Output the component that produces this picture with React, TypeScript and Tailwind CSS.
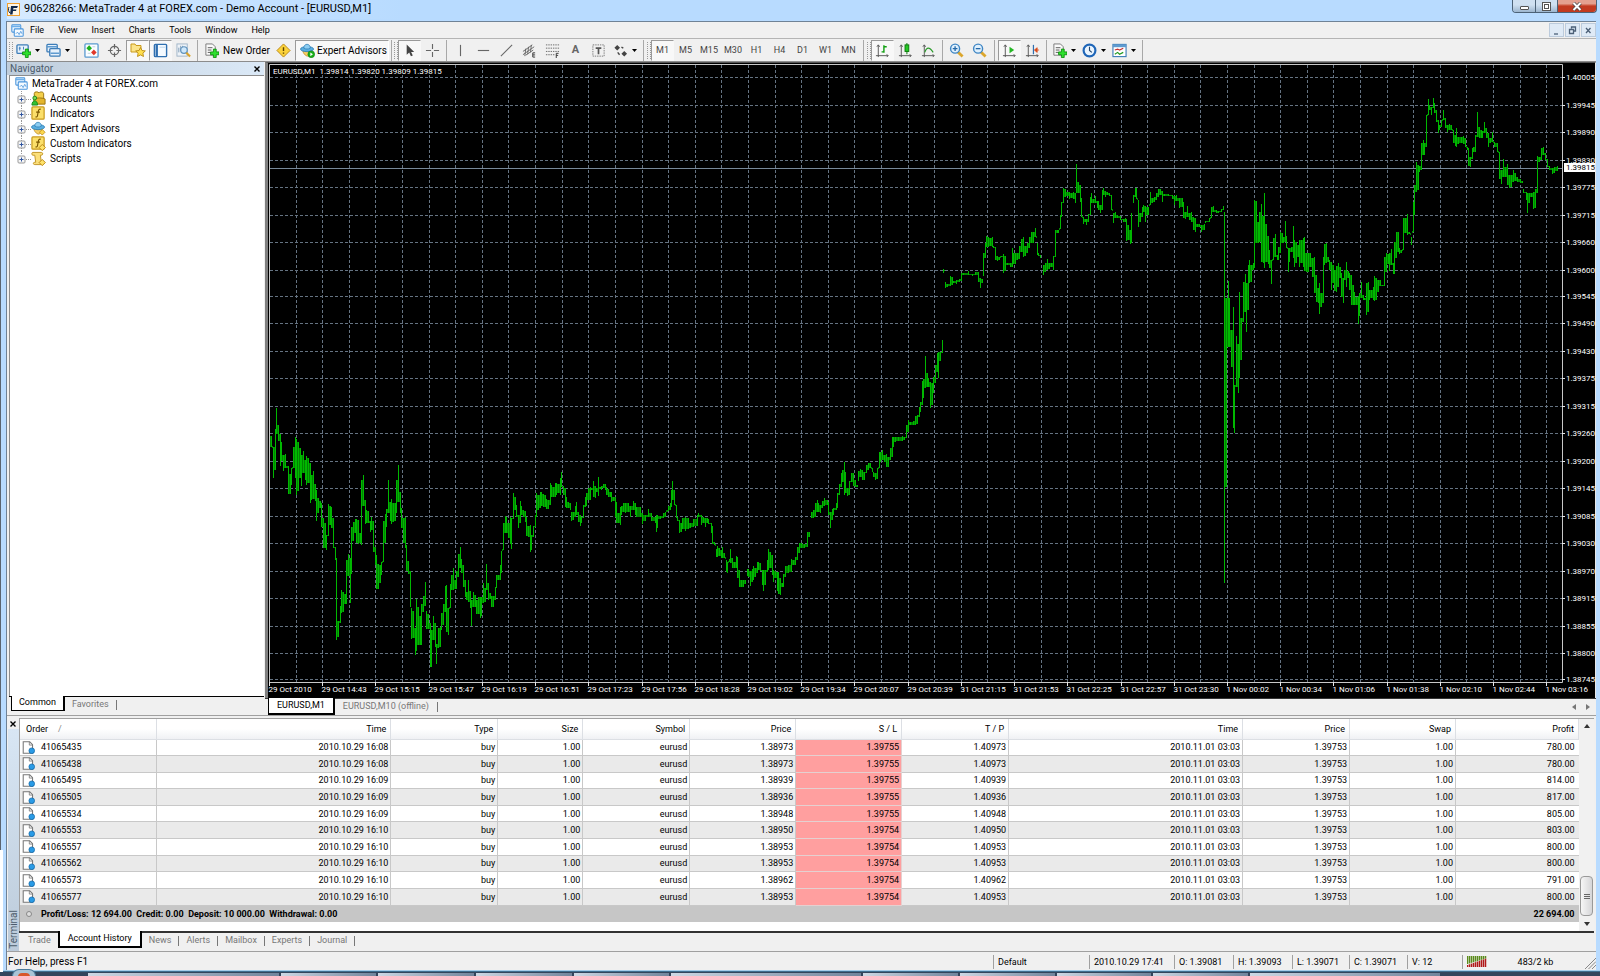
import { useState, type ReactNode } from "react";
import clsx from "clsx";

/* ---------- data ---------- */

const MENU = ["File", "View", "Insert", "Charts", "Tools", "Window", "Help"];
const TIMEFRAMES = ["M1", "M5", "M15", "M30", "H1", "H4", "D1", "W1", "MN"];
const TERMINAL_TABS = ["Trade", "Account History", "News", "Alerts", "Mailbox", "Experts", "Journal"];

const COLUMNS = [
  { label: "Order", w: 137 },
  { label: "Time", w: 234 },
  { label: "Type", w: 107 },
  { label: "Size", w: 85 },
  { label: "Symbol", w: 107 },
  { label: "Price", w: 106 },
  { label: "S / L", w: 106 },
  { label: "T / P", w: 107 },
  { label: "Time", w: 234 },
  { label: "Price", w: 107 },
  { label: "Swap", w: 106 },
  { label: "Profit", w: 123 },
];
const TOTAL_W = COLUMNS.reduce((sum, c) => sum + c.w, 0);

// order, open time, open price, s/l, t/p, profit
const ORDERS = [
  ["41065435", "16:08", "1.38973", "1.39755", "1.40973", "780.00"],
  ["41065438", "16:08", "1.38973", "1.39755", "1.40973", "780.00"],
  ["41065495", "16:09", "1.38939", "1.39755", "1.40939", "814.00"],
  ["41065505", "16:09", "1.38936", "1.39755", "1.40936", "817.00"],
  ["41065534", "16:09", "1.38948", "1.39755", "1.40948", "805.00"],
  ["41065553", "16:10", "1.38950", "1.39754", "1.40950", "803.00"],
  ["41065557", "16:10", "1.38953", "1.39754", "1.40953", "800.00"],
  ["41065562", "16:10", "1.38953", "1.39754", "1.40953", "800.00"],
  ["41065573", "16:10", "1.38962", "1.39754", "1.40962", "791.00"],
  ["41065577", "16:10", "1.38953", "1.39754", "1.40953", "800.00"],
];

const PRICES = [
  40005, 39945, 39890, 39830, 39775, 39715, 39660, 39600, 39545, 39490, 39430, 39375,
  39315, 39260, 39200, 39145, 39085, 39030, 38970, 38915, 38855, 38800, 38745,
];

const TIMES = [
  "29 Oct 2010", "29 Oct 14:43", "29 Oct 15:15", "29 Oct 15:47", "29 Oct 16:19",
  "29 Oct 16:51", "29 Oct 17:23", "29 Oct 17:56", "29 Oct 18:28", "29 Oct 19:02",
  "29 Oct 19:34", "29 Oct 20:07", "29 Oct 20:39", "31 Oct 21:15", "31 Oct 21:53",
  "31 Oct 22:25", "31 Oct 22:57", "31 Oct 23:30", "1 Nov 00:02", "1 Nov 00:34",
  "1 Nov 01:06", "1 Nov 01:38", "1 Nov 02:10", "1 Nov 02:44", "1 Nov 03:16",
];

// x, high, low triples; every array is one unbroken run of bars
const RUNS: number[][] = [
  [
    269,422,463, 271,436,447, 273,447,478, 275,429,470, 276,408,434, 278,425,441, 280,434,466,
    281,442,461, 283,455,471, 285,454,468, 288,466,494, 290,474,494, 291,468,485, 293,447,468,
    295,437,478, 296,439,495, 298,442,491, 300,448,478, 301,455,486, 303,451,473, 305,460,480,
    306,456,485, 308,458,483, 310,463,503, 311,475,500, 313,471,499, 315,484,501, 316,490,521,
    318,498,513, 320,501,508, 321,503,527, 323,518,548, 325,523,548, 326,535,550, 328,504,536,
    330,506,525, 331,507,528, 333,518,548, 335,547,560, 336,558,640, 338,621,637, 340,606,623,
    341,590,613, 343,592,612, 345,594,604, 346,560,604, 348,554,576, 350,558,603, 351,527,574,
    353,522,541, 355,519,533, 356,519,543, 358,520,544, 360,533,543, 361,480,545, 363,475,506,
    365,500,524, 366,510,523, 368,511,523, 370,521,532, 371,517,530, 373,521,552, 375,547,565,
    376,555,589, 378,564,589, 380,565,583, 381,562,575, 383,521,562, 385,514,543, 386,509,527,
    388,480,513, 390,502,521, 391,499,524, 393,503,522, 395,503,521, 396,480,513, 398,465,502,
    400,492,513, 401,508,528, 403,518,543, 405,517,548, 406,545,571, 408,561,574, 410,571,607,
    411,608,639, 413,611,638, 415,628,655, 416,599,651, 418,607,645, 420,616,645, 421,604,645,
    423,596,612, 425,582,606, 426,611,629, 428,614,629, 430,623,667, 431,630,667, 433,616,640,
    435,623,647, 436,644,664, 438,628,648, 440,627,647, 441,613,630, 443,604,625, 445,586,612,
    446,585,632, 448,608,635, 450,584,608, 451,575,590, 453,568,590, 455,580,589, 456,571,589,
    458,554,577, 460,547,568, 461,559,573, 463,565,587, 465,580,597, 466,592,600, 468,580,602,
    470,591,608, 471,600,626, 473,592,607, 475,595,607, 476,600,614, 478,597,614, 480,597,618,
    481,597,616, 483,583,603, 485,588,602, 486,564,590, 488,583,600, 490,593,599, 491,596,607,
    493,596,607, 495,587,600, 496,575,588, 498,575,580, 500,565,580, 501,551,573, 503,523,550,
    505,516,533, 506,517,533, 508,523,538, 510,517,544, 511,518,549, 513,493,519, 515,497,510,
    516,505,517, 518,515,528, 520,501,523, 521,506,515, 523,510,517, 525,511,522, 526,517,536,
    528,526,537, 530,525,552, 531,535,550, 533,526,537, 535,515,527, 536,493,517, 538,495,510,
    540,492,508, 541,492,506, 543,494,507, 545,495,507, 546,499,509, 548,500,509, 550,483,505,
    551,485,497, 553,487,497, 555,483,497, 556,483,495, 558,484,493, 560,478,495, 561,472,487,
    563,486,495, 565,488,507, 566,497,508, 568,502,508, 570,503,510, 571,512,521, 573,512,520,
    575,506,517, 576,502,515, 578,512,522, 580,515,526, 581,517,523, 583,505,518, 585,497,507,
    586,493,506, 588,488,500, 590,487,500, 591,488,490, 593,481,497, 595,486,498, 596,488,492,
    598,477,496, 600,487,489, 601,486,490, 603,484,488, 605,484,490, 606,487,495, 608,489,497,
    610,492,497, 611,492,502, 613,497,501, 615,497,517, 616,502,523, 618,513,523, 620,507,525,
    621,506,515, 623,503,512, 625,503,513, 628,503,512, 630,506,517, 633,501,510, 635,503,515,
    636,507,517, 640,507,517, 642,513,524, 645,515,521, 648,509,517, 651,513,521, 655,517,523,
    656,515,532, 657,515,528, 660,516,519, 663,513,518, 665,512,517, 668,506,511, 670,503,510,
    671,490,507, 672,481,500, 674,490,505, 676,505,518, 677,517,521, 679,520,533, 681,523,532,
    682,518,529, 685,517,531, 688,518,529, 690,523,528, 693,519,527, 697,515,526, 698,513,517,
    701,515,525, 703,517,523, 705,518,527, 707,518,523, 708,519,524, 711,523,533, 712,526,544,
    714,542,545, 716,549,557, 717,546,557, 719,548,556, 721,550,558, 722,547,558, 724,553,558,
    726,560,572, 727,562,573, 729,559,562, 730,549,563, 732,558,568, 734,562,568, 736,556,568,
    737,557,578, 739,570,587, 741,580,587, 743,580,587, 745,580,584,
  ],
  [
    747,569,576, 748,569,577, 750,571,586, 752,569,582, 753,566,580, 755,568,577, 757,562,573,
    758,562,570, 760,563,571, 762,570,585, 763,570,591, 765,570,585, 767,560,572, 768,549,570,
    770,552,568, 772,555,575, 773,570,582, 775,571,578, 777,572,591, 778,572,594, 780,578,595,
    782,583,587, 783,574,587, 785,566,577, 788,565,573, 791,559,572, 793,560,565, 795,557,565,
    797,547,560, 799,543,553, 801,543,548, 804,544,548, 807,532,547, 809,532,537,
  ],
  [
    811,512,518, 813,510,518, 815,503,517, 817,500,512, 818,503,512, 820,505,513, 822,501,508,
    824,498,506, 827,500,505, 828,502,515, 830,512,528, 832,509,520, 833,508,515, 836,503,510,
    837,493,508, 839,484,495, 841,473,487, 842,470,482, 844,462,495, 845,472,493, 847,488,496,
    849,481,495, 851,473,482, 853,473,486, 855,480,487, 857,485,487, 858,471,481, 860,469,477,
    862,470,480, 864,472,480, 866,465,473, 868,463,470, 870,463,468, 872,468,472, 873,472,477,
    875,473,480, 877,468,479, 879,452,468, 880,452,462, 882,450,460, 884,455,462, 886,454,467,
    888,457,467, 890,448,460, 892,437,457, 893,437,447, 895,437,442, 898,437,441, 902,436,441,
    904,437,440, 906,425,438, 908,420,432, 910,422,425, 913,421,425, 915,416,425, 917,415,424,
    919,407,417, 920,402,412, 922,381,405, 923,379,398, 925,356,388, 927,373,387, 928,378,387,
    930,382,408, 932,383,405, 933,377,393, 935,365,383, 937,353,372, 938,352,378, 940,352,361,
    942,340,353,
  ],
  [943,269,273, 944,270,271],
  [
    945,282,288, 947,284,287, 950,276,286, 952,277,285, 953,281,283, 956,280,284, 959,279,282,
    961,273,281, 963,273,275, 968,271,275, 972,274,276, 975,272,275, 978,272,282, 980,278,288,
    982,279,283, 983,253,276, 985,243,258, 986,236,247, 988,237,247, 990,238,246, 992,237,247,
    993,246,248, 995,247,260, 997,256,261, 999,257,260, 1001,256,257, 1003,254,273, 1005,256,271,
    1007,263,265, 1010,263,267, 1012,248,267, 1013,253,264, 1015,253,264, 1017,253,260,
    1019,246,259, 1021,239,252, 1023,237,257, 1025,246,256, 1027,243,253, 1029,237,248,
    1031,232,243, 1033,232,243, 1035,228,237, 1037,243,255, 1038,253,256, 1040,255,258,
  ],
  [
    1043,265,275, 1045,263,272, 1047,259,270, 1049,263,269, 1051,263,267, 1053,256,270,
    1055,230,257, 1057,230,233, 1058,230,233, 1060,215,229, 1061,202,217, 1063,188,203,
    1065,189,197, 1067,192,196, 1069,192,199, 1071,193,198, 1073,192,199, 1075,193,203,
    1076,164,193, 1078,182,193, 1080,185,202, 1081,198,217, 1083,217,224, 1085,219,222,
    1086,219,225, 1088,214,222, 1090,197,215, 1091,193,203, 1093,199,203, 1095,196,203,
    1097,201,208, 1098,201,210, 1100,205,213, 1102,190,210, 1103,188,195, 1105,191,197,
    1107,192,195, 1109,193,196, 1111,195,210, 1113,213,223, 1115,212,218, 1117,215,218,
    1120,216,220, 1123,219,222, 1125,218,222, 1126,219,241, 1128,225,240, 1130,230,244,
    1131,213,243,
  ],
  [
    1133,195,203, 1135,188,197, 1136,188,199, 1138,200,227, 1140,213,222,
    1142,207,217, 1143,205,212, 1145,206,222, 1147,207,215, 1148,207,215, 1150,192,205,
    1152,198,203, 1154,197,202, 1156,193,200, 1158,189,197, 1160,189,195, 1162,191,202,
    1164,194,196, 1168,194,196, 1172,195,199, 1174,196,205, 1176,195,201, 1179,198,208,
    1182,198,207, 1183,202,218, 1185,212,219, 1187,206,217, 1189,213,220, 1191,212,222,
    1193,217,230, 1195,218,232, 1197,224,227, 1199,224,227, 1201,225,232, 1204,224,230,
    1205,221,223, 1209,218,222, 1211,207,218, 1213,206,212, 1216,210,213, 1218,211,213,
    1221,209,212, 1223,206,210,
  ],
  [
    1224,212,583, 1226,298,487, 1228,281,347, 1229,298,347, 1231,330,367, 1233,307,428,
    1234,385,433, 1236,336,387, 1238,344,393, 1239,292,378, 1241,318,360, 1243,282,322,
    1245,274,312, 1246,283,332, 1248,265,310, 1249,260,283, 1251,265,282, 1253,263,270,
    1254,200,268, 1256,201,243, 1258,222,243, 1259,212,242, 1261,204,262, 1263,216,263,
    1264,193,268, 1266,224,262, 1268,236,264, 1269,250,268, 1271,260,284, 1273,238,260,
    1275,234,257, 1277,255,260, 1278,247,260, 1280,232,253, 1282,233,243, 1283,237,243,
    1285,221,242, 1286,236,248, 1288,248,272, 1289,248,262, 1291,247,252, 1293,226,258,
    1294,240,267, 1296,242,263, 1298,245,257, 1299,240,267, 1301,240,263, 1303,238,267,
    1304,237,271, 1306,253,272, 1308,253,272, 1310,253,267, 1312,258,277, 1314,257,293,
    1316,275,302, 1318,288,303, 1319,283,314, 1321,293,307, 1323,257,303, 1324,244,265,
    1326,243,263, 1328,257,262, 1329,260,270, 1331,262,290, 1333,265,283, 1334,270,291,
    1336,266,292, 1338,263,287, 1340,267,278, 1341,273,297, 1343,278,303, 1344,270,280,
    1346,262,287, 1348,271,278, 1349,273,290, 1351,275,305, 1353,285,305, 1354,292,305,
    1356,297,305, 1358,296,324, 1359,293,316, 1361,282,298, 1363,295,300, 1364,298,300,
    1366,283,315, 1368,282,312, 1369,290,300, 1371,290,298, 1373,287,300, 1374,276,301,
    1376,278,300, 1378,280,292, 1380,280,286, 1382,285,286, 1384,257,286, 1386,253,272,
    1388,254,264, 1389,253,271, 1391,249,265, 1393,263,274, 1394,242,274, 1396,232,258,
    1398,232,252, 1399,248,254, 1401,250,253, 1403,218,250, 1405,218,233, 1407,214,235,
    1409,232,234, 1411,237,245, 1413,202,232, 1414,185,215, 1416,162,192, 1418,165,190,
    1419,166,172, 1421,143,170, 1423,140,155, 1424,143,155, 1426,115,147, 1428,99,115,
    1429,105,110, 1431,107,115, 1433,98,108, 1434,103,113, 1436,110,122, 1438,120,133,
    1439,125,130, 1441,120,127, 1443,110,120, 1445,118,128, 1447,125,132, 1449,124,130,
    1451,125,130, 1453,130,143, 1455,135,146, 1456,128,147, 1458,137,144, 1461,137,143,
    1463,136,144, 1465,138,147, 1467,147,150, 1468,148,166, 1470,157,167, 1472,148,159,
    1473,147,152, 1475,135,152, 1477,112,137, 1479,127,138, 1481,130,138, 1482,131,138,
    1484,122,133, 1486,128,138, 1488,133,147, 1490,138,143, 1492,132,142, 1494,142,147,
    1497,143,152, 1499,152,179, 1501,170,184, 1503,159,177, 1505,167,177, 1507,164,185,
    1509,175,188, 1511,175,187, 1513,170,182, 1515,173,181, 1517,177,182, 1520,179,183,
    1522,181,183,
  ],
  [
    1523,189,193, 1526,192,200, 1527,193,213, 1529,193,203, 1531,193,197, 1533,192,209,
    1535,189,208, 1537,156,193, 1539,157,162, 1541,148,160, 1543,147,155, 1545,153,160,
    1547,159,167, 1549,166,170, 1552,168,174, 1554,167,173, 1557,166,171,
  ],
];

/* ---------- chart ---------- */

const yOf = (price: number) => Math.round(76.6 + (40005 - price) * 0.478) + 0.5;
const gridX = (k: number) => 269.5 + Math.round(k * 26.61);

function barPath() {
  let bars = "";
  let joins = "";
  for (const run of RUNS) {
    for (let i = 0; i < run.length; i += 3) {
      const [x, hi, lo] = run.slice(i, i + 3);
      bars += `M${x + 0.5} ${hi}V${lo}`;
      if (i + 3 < run.length) {
        const [nx, nhi, nlo] = run.slice(i + 3, i + 6);
        const top = Math.max(hi, nhi);
        const bottom = Math.min(lo, nlo);
        for (let g = x + 1; g < nx; g++) {
          joins += top < bottom ? `M${g + 0.5} ${top}V${bottom}` : `M${g + 0.5} ${bottom - 1}v2`;
        }
      }
    }
  }
  return { bars, joins };
}

const { bars: BARS, joins: JOINS } = barPath();

function PriceChart() {
  return (
    <svg
      viewBox="268 63 1327 635"
      className="block h-full w-full bg-black font-['Roboto',sans-serif] text-[8px]"
      role="img"
      aria-label="EURUSD M1 bar chart"
    >
      <g stroke="#778899" strokeWidth="1" strokeDasharray="3 2" opacity="0.85">
        {Array.from({ length: 48 }, (_, i) => (
          <line key={i} x1={gridX(i + 1)} x2={gridX(i + 1)} y1="65" y2="682" />
        ))}
        {PRICES.map((p) => (
          <line key={p} x1="270" x2="1562" y1={yOf(p)} y2={yOf(p)} />
        ))}
      </g>
      <line x1="269" x2="1562" y1="168.5" y2="168.5" stroke="#778899" />
      <path d={JOINS} stroke="#008400" fill="none" />
      <path d={BARS} stroke="#00b800" fill="none" />
      <path d="M269.5 64.5H1562.5V682.5H269.5Z" stroke="#c8c8c8" fill="none" />
      <rect x="270" y="66" width="173" height="9" fill="#000" />
      <text x="273" y="74" fill="#fff">EURUSD,M1&nbsp; 1.39814 1.39820 1.39809 1.39815</text>
      {PRICES.map((p) => (
        <g key={p}>
          <path d={`M1562 ${yOf(p)}h3`} stroke="#e8e8e8" />
          <text x="1566" y={yOf(p) + 2.5} fill="#fff">{`1.${p - 0}`.replace("1.4", "1.4")}</text>
        </g>
      ))}
      <rect x="1564" y="163" width="31" height="9" fill="#fff" />
      <text x="1566" y="170" fill="#000">1.39815</text>
      {TIMES.map((t, i) => (
        <g key={t}>
          <path d={`M${gridX(i * 2)} 682v4`} stroke="#e8e8e8" />
          <text x={gridX(i * 2) - 1} y="692" fill="#fff">{t}</text>
        </g>
      ))}
    </svg>
  );
}

/* ---------- icons ---------- */

function Ico({ children, className = "size-[15px]" }: { children: ReactNode; className?: string }) {
  return (
    <svg viewBox="0 0 16 16" fill="none" className={clsx("shrink-0", className)} aria-hidden="true">
      {children}
    </svg>
  );
}

const Plus = () => (
  <path d="M10 6.500h3v3h3v3h-3v3h-3v-3H7v-3h3z" fill="#2ee02e" stroke="#0a8a0a" strokeWidth="0.9" />
);

const NewChartIcon = () => (
  <Ico>
    <rect x="1" y="2" width="12" height="9" rx="1" fill="#e6f1fb" stroke="#3d7db8" strokeWidth="1.4" />
    <path d="M3 5.500h2M4 4v4M8 4v3" stroke="#3d7db8" />
    <Plus />
  </Ico>
);

const ProfilesIcon = () => (
  <Ico>
    <rect x="1" y="1.500" width="11" height="8" rx="1" fill="#e6f1fb" stroke="#3d7db8" strokeWidth="1.4" />
    <rect x="4" y="6" width="11" height="8" rx="1" fill="#e6f1fb" stroke="#3d7db8" strokeWidth="1.4" />
    <path d="M1 4h11M5 11h9" stroke="#5f9bd0" strokeWidth="1.5" />
  </Ico>
);

const MarketIcon = () => (
  <Ico>
    <rect x="1" y="1" width="14" height="14" rx="1" fill="#fafdff" stroke="#5a9ad0" strokeWidth="1.4" />
    <path d="M5.500 2.500l3 3-3 3-3-3z" fill="#1fb01f" />
    <path d="M10.500 7l3 3-3 3-3-3z" fill="#e0382a" />
    <path d="M9 4h3M4 11h3" stroke="#b8cfe2" />
  </Ico>
);

const TargetIcon = () => (
  <Ico>
    <circle cx="8" cy="8" r="4.500" stroke="#666" strokeWidth="1.3" />
    <path d="M8 1v5M8 10v5M1 8h5M10 8h5" stroke="#666" strokeWidth="1.3" />
  </Ico>
);

const FolderStarIcon = () => (
  <Ico className="size-4">
    <path d="M1 2h4l1 1.500h5V10H1z" fill="#fbe48a" stroke="#c99a1c" />
    <path d="M10.500 5.500l1.500 3 3.300.4-2.400 2.300.6 3.300-3-1.600-3 1.600.6-3.300-2.400-2.300 3.300-.4z" fill="#ffdf4f" stroke="#b98a12" strokeWidth="0.9" />
  </Ico>
);

const PanelIcon = () => (
  <Ico>
    <rect x="1.500" y="1.500" width="13" height="13" rx="1" fill="#f4faff" stroke="#2f6fb0" strokeWidth="1.5" />
    <path d="M4 2v12" stroke="#2f6fb0" strokeWidth="2.500" />
    <path d="M7 4.500h6" stroke="#b9d3ea" />
  </Ico>
);

const TesterIcon = () => (
  <Ico>
    <rect x="1" y="1" width="11" height="13" fill="#eef3f8" stroke="#9fb4c7" />
    <path d="M3 10V5M5 8V3M7 6V3" stroke="#7c9ab5" />
    <circle cx="8.500" cy="7.500" r="3.500" fill="#cfe8fb" stroke="#5f92bd" strokeWidth="1.3" />
    <path d="M11 10.500l4 4" stroke="#d9a32c" strokeWidth="2.200" />
  </Ico>
);

const OrderIcon = () => (
  <Ico>
    <path d="M2 1h7l3 3v9H2z" fill="#fafafa" stroke="#777" />
    <path d="M4 5h5M4 7.500h4M4 10h3" stroke="#555" />
    <Plus />
  </Ico>
);

const AlertIcon = () => (
  <Ico>
    <path d="M8 1l7 7-7 7-7-7z" fill="#fbd23a" stroke="#b98511" />
    <path d="M8 4.500v4M8 10v1.500" stroke="#5c4300" strokeWidth="1.5" />
  </Ico>
);

const HatIcon = ({ badge = "play" }: { badge?: "play" | "gold" }) => (
  <Ico>
    <path d="M3 8.500c1 4 4 5.500 5 5.500s3-1 4-5.500c-3 1-6 1-9 0z" fill="#f6cf64" stroke="#b88a22" strokeWidth="0.8" />
    <ellipse cx="7.500" cy="6.500" rx="7" ry="2.700" fill="#58aee0" stroke="#2d7cb3" strokeWidth="0.8" />
    <path d="M4 5.500c0-5.500 7-5.500 7 0-2 1.200-5 1.200-7 0z" fill="#8ccdf2" stroke="#2d7cb3" strokeWidth="0.8" />
    {badge === "play" ? (
      <>
        <circle cx="12" cy="12" r="3.600" fill="#19b019" stroke="#0b7a0b" strokeWidth="0.6" />
        <path d="M11 10l2.800 2-2.800 2z" fill="#fff" />
      </>
    ) : (
      <path d="M12 9l3 3-3 3-3-3z" fill="#fbd74c" stroke="#b98511" strokeWidth="0.8" />
    )}
  </Ico>
);

const CursorIcon = () => (
  <Ico><path d="M5 1.500v11l2.700-2.300 1.800 4 2-.9-1.800-3.800H13z" fill="#444" /></Ico>
);
const CrossIcon = () => (
  <Ico><path d="M8 1v5.500M8 9.500V15M1 8h5.500M9.500 8H15" stroke="#666" strokeWidth="1.2" /></Ico>
);
const VLineIcon = () => <Ico><path d="M8 2v12" stroke="#666" strokeWidth="1.2" /></Ico>;
const HLineIcon = () => <Ico><path d="M2 8h12" stroke="#666" strokeWidth="1.2" /></Ico>;
const TrendIcon = () => <Ico><path d="M2 14L14 2" stroke="#666" strokeWidth="1.2" /></Ico>;

const ChannelIcon = () => (
  <Ico>
    <path d="M1 9L11 2M1 12.500L13 4M4 13l8-5.500M4 6l-1 8M7 4l-1 8M10 2l-1 8" stroke="#666" />
    <path d="M14 10.500h-2.500v4.500H14M11.500 12.700H14" stroke="#333" />
  </Ico>
);

const FiboIcon = () => (
  <Ico>
    <path d="M1 2h14M1 5.500h14M1 9h14M1 12.500h9" stroke="#666" strokeDasharray="1.500 1" />
    <path d="M14.500 11h-2.500v5M12 13.200h2" stroke="#333" />
  </Ico>
);

const LabelIcon = () => (
  <Ico>
    <rect x="2" y="2" width="12" height="12" stroke="#777" strokeDasharray="1.500 1" />
    <path d="M5 5.500h6M8 5.500V12" stroke="#555" strokeWidth="1.8" />
  </Ico>
);

const ArrowsIcon = () => (
  <Ico>
    <path d="M4.500 2l3 3-3 3-3-3zM12 8.500l3 3-3 3-3-3z" fill="#444" />
    <path d="M9 4.500l2 1M5 10l2 2.500" stroke="#444" strokeWidth="1.5" />
  </Ico>
);

const Axes = () => (
  <path d="M3.500 2v13M1 13.500h13M2 4l1.500-2L5 4M12.500 12l1.500 1.500-1.500 1.500" stroke="#555" />
);
const BarsIcon = () => <Ico><Axes /><path d="M9.500 2.500v8M9.500 4h3M7 9.500h2.500" stroke="#12a012" strokeWidth="1.500" /></Ico>;
const CandleIcon = () => (
  <Ico><Axes /><path d="M9.500 0v12" stroke="#0a7a0a" /><rect x="7.500" y="2" width="4" height="7" fill="#25c925" stroke="#0a7a0a" /></Ico>
);
const LineIcon = () => <Ico><Axes /><path d="M4 10c2-6 5-6 9 0" stroke="#2a9a2a" strokeWidth="1.2" /></Ico>;
const ScrollIcon = () => <Ico><Axes /><path d="M8 4l5 3.500-5 3.500z" fill="#25b825" /></Ico>;
const ShiftIcon = () => (
  <Ico>
    <Axes />
    <path d="M9 2v10" stroke="#2f6fb0" strokeWidth="1.3" />
    <path d="M10 7.500l3-2.500v5zM13 7.500h2" fill="#d84a1a" stroke="#d84a1a" strokeWidth="0.8" />
  </Ico>
);

const ZoomIcon = ({ minus = false }: { minus?: boolean }) => (
  <Ico>
    <path d="M9.500 9.500l5 5" stroke="#dba62d" strokeWidth="3" />
    <circle cx="6.500" cy="6" r="4.800" fill="#dff0fd" stroke="#3f86c4" strokeWidth="1.5" />
    <path d={minus ? "M4 6h5" : "M4 6h5M6.500 3.500v5"} stroke="#2468a8" strokeWidth="1.4" />
  </Ico>
);

const ClockIcon = () => (
  <Ico>
    <circle cx="8" cy="8" r="6.300" fill="#eaf5ff" stroke="#1f66b8" strokeWidth="2.300" />
    <path d="M8 4v4l2.500 2" stroke="#24486e" strokeWidth="1.2" />
  </Ico>
);

const TemplateIcon = () => (
  <Ico>
    <rect x="1" y="1.500" width="14" height="13" fill="#fff" stroke="#3d7db8" strokeWidth="1.2" />
    <path d="M1 3h14" stroke="#5f9bd0" strokeWidth="3" />
    <path d="M3 7.500l3-1 2 1 4-2" stroke="#c53030" strokeWidth="1.2" />
    <path d="M3 12l3-2 2 2 4-2" stroke="#1f9a1f" strokeWidth="1.2" />
  </Ico>
);

const AppIcon = ({ className = "size-[13px]" }: { className?: string }) => (
  <Ico className={className}>
    <rect x="1" y="1" width="11" height="9" rx="1" fill="#eaf5ff" stroke="#4a95dc" strokeWidth="1.3" />
    <path d="M1 3h11" stroke="#6fb0ea" strokeWidth="2" />
    <rect x="4" y="6" width="11" height="9" rx="1" fill="#f4faff" stroke="#4a95dc" strokeWidth="1.3" />
    <path d="M6 12l2-2 2 3 2-4 1.500 3" stroke="#4a95dc" />
  </Ico>
);

const AccountsIcon = () => (
  <Ico>
    <path d="M3.500 8V2.500c0-2 4-2 5-.5 1-1.500 5-1.500 5 1V8z" fill="#f3cf4a" stroke="#9a7410" />
    <path d="M3 14V8.500c3-1.500 9-1.500 12 0V14z" fill="#e3b52c" stroke="#9a7410" />
    <circle cx="4" cy="7.500" r="2" fill="#7ed957" stroke="#1b8a1b" />
    <path d="M1 15c0-6 6-6 6 0z" fill="#33c133" stroke="#1b8a1b" />
  </Ico>
);

const FnIcon = ({ custom = false }: { custom?: boolean }) => (
  <Ico>
    <rect x="1" y="1" width="13" height="13" rx="1" fill="#fbdf6a" stroke="#c99a1c" strokeWidth="1.3" />
    <path d="M10.500 3.500c-2-.5-2.500.5-2.800 2.500L7 10c-.2 1.500-1 2-2.200 1.500M5.500 6.500h4" stroke="#7a5600" strokeWidth="1.2" />
    {custom && <path d="M12 9l3.300 3.300L12 15.600l-3.300-3.300z" fill="#ffe36a" stroke="#b98511" />}
  </Ico>
);

const ScriptIcon = () => (
  <Ico>
    <path d="M2 1.500h9c2 0 2 3 0 3h-1L11 12c2 0 2 2.500 0 2.500H4c-2 0-2-2.500 0-2.500h1L4 4.500H2c-1.500 0-1.500-3 0-3z" fill="#fbdf7a" stroke="#c09222" />
    <path d="M12 9l3.300 3.300L12 15.600l-3.300-3.300z" fill="#ffe36a" stroke="#b98511" />
  </Ico>
);

const DocIcon = () => (
  <Ico className="size-[13px]">
    <path d="M1.500 1h8L13 4.500V15H1.500z" fill="#fff" stroke="#777" strokeWidth="1.3" />
    <path d="M9 1v4h4" stroke="#777" />
    <circle cx="12" cy="12" r="3.500" fill="#2a9be6" stroke="#0c5f9e" strokeWidth="0.8" />
  </Ico>
);

/* ---------- toolbar ---------- */

const Sep = ({ tight = false }: { tight?: boolean }) => (
  <span className={clsx("h-[21px] w-px shrink-0 bg-[#a8a8a8]", tight ? "mx-[2px]" : "mx-[3px]")} />
);

const Grip = () => (
  <span className="h-[17px] w-1 shrink-0 border-x border-dotted border-[#9a9a9a]" />
);

function Tool({ label, pressed, menu, children }: {
  label: string;
  pressed?: boolean;
  menu?: boolean;
  children: ReactNode;
}) {
  return (
    <button
      type="button"
      aria-label={label}
      aria-pressed={pressed}
      className={clsx(
        "flex h-[21px] shrink-0 items-center justify-center border text-[9px] text-[#444]",
        menu ? "w-[30px] gap-1" : "w-[23px]",
        pressed ? "border-[#f8f8f8] border-t-[#9a9a9a] border-l-[#9a9a9a] bg-[#f8f8f8]" : "border-transparent",
      )}
    >
      {children}
      {menu && <svg viewBox="0 0 5 3" className="h-[3px] w-[5px]" aria-hidden="true"><path d="M0 0h5L2.500 3z" /></svg>}
    </button>
  );
}

function Toolbar() {
  const [frame, setFrame] = useState("M1");
  return (
    <div className="flex h-[23px] shrink-0 items-center overflow-hidden border-b border-[#8c8c8c] bg-[#f0f0f0] pl-[2px]">
      <Grip />
      <Tool label="New chart" menu><NewChartIcon /></Tool>
      <Tool label="Profiles" menu><ProfilesIcon /></Tool>
      <Sep />
      <Tool label="Market Watch"><MarketIcon /></Tool>
      <Tool label="Data Window"><TargetIcon /></Tool>
      <Tool label="Navigator" pressed><FolderStarIcon /></Tool>
      <Tool label="Terminal" pressed><PanelIcon /></Tool>
      <Tool label="Strategy Tester"><TesterIcon /></Tool>
      <Sep tight />
      <button type="button" className="flex h-[21px] w-[72px] shrink-0 items-center gap-1 pl-1 text-[10px] whitespace-nowrap">
        <OrderIcon />New Order
      </button>
      <Tool label="MetaEditor"><AlertIcon /></Tool>
      <button
        type="button"
        aria-pressed="true"
        className="flex h-[21px] w-[94px] shrink-0 items-center gap-[2px] border border-white border-t-[#9a9a9a] border-l-[#9a9a9a] bg-[#f8f8f8] pl-1 text-[10px] whitespace-nowrap"
      >
        <HatIcon />Expert Advisors
      </button>
      <Sep tight />
      <Grip />
      <Tool label="Cursor" pressed><CursorIcon /></Tool>
      <Tool label="Crosshair"><CrossIcon /></Tool>
      <Sep tight />
      <Tool label="Vertical line"><VLineIcon /></Tool>
      <Tool label="Horizontal line"><HLineIcon /></Tool>
      <Tool label="Trendline"><TrendIcon /></Tool>
      <Tool label="Equidistant channel"><ChannelIcon /></Tool>
      <Tool label="Fibonacci retracement"><FiboIcon /></Tool>
      <Tool label="Text"><span className="text-[11px] font-bold text-[#666]">A</span></Tool>
      <Tool label="Text label"><LabelIcon /></Tool>
      <Tool label="Arrows" menu><ArrowsIcon /></Tool>
      <Sep />
      <Grip />
      {TIMEFRAMES.map((t) => (
        <button
          key={t}
          type="button"
          onClick={() => setFrame(t)}
          className={clsx(
            "h-[21px] shrink-0 border pt-px text-[9px] text-[#444]",
            t.length > 2 ? "w-6" : "w-[23px]",
            frame === t
              ? "border-[#f8f8f8] border-t-[#9a9a9a] border-l-[#9a9a9a] bg-[#f8f8f8]"
              : "border-transparent",
          )}
        >
          {t}
        </button>
      ))}
      <Sep />
      <Grip />
      <Tool label="Bar chart" pressed><BarsIcon /></Tool>
      <Tool label="Candlesticks"><CandleIcon /></Tool>
      <Tool label="Line chart"><LineIcon /></Tool>
      <Sep tight />
      <Tool label="Zoom in"><ZoomIcon /></Tool>
      <Tool label="Zoom out"><ZoomIcon minus /></Tool>
      <Sep />
      <Tool label="Auto scroll" pressed><ScrollIcon /></Tool>
      <Tool label="Chart shift"><ShiftIcon /></Tool>
      <Sep tight />
      <Tool label="Indicators" menu><OrderIcon /></Tool>
      <Tool label="Periods" menu><ClockIcon /></Tool>
      <Tool label="Templates" menu><TemplateIcon /></Tool>
      <Sep />
    </div>
  );
}

/* ---------- panels ---------- */

const CloseX = () => (
  <svg viewBox="0 0 6 6" className="size-[6px]" aria-hidden="true">
    <path d="M0.500 0.500l5 5M5.500 0.500l-5 5" stroke="#000" strokeWidth="1.4" />
  </svg>
);

const TREE = [
  { label: "Accounts", icon: <AccountsIcon /> },
  { label: "Indicators", icon: <FnIcon /> },
  { label: "Expert Advisors", icon: <HatIcon badge="gold" /> },
  { label: "Custom Indicators", icon: <FnIcon custom /> },
  { label: "Scripts", icon: <ScriptIcon /> },
];

function Navigator() {
  return (
    <aside className="flex w-[258px] shrink-0 flex-col pr-px">
      <header className="flex h-[13px] items-center justify-between bg-linear-to-r from-[#bfcddb] to-[#dbe9f7] pr-1 pl-[3px] text-[10px] leading-[13px] text-[#4c5c6c]">
        Navigator
        <button type="button" aria-label="Close navigator"><CloseX /></button>
      </header>
      <ul className="ml-[2px] flex-1 border-t border-l border-[#8c8c8c] bg-white text-[10px] leading-[15px]">
        <li className="flex h-[15px] items-center gap-1 pl-[5px]">
          <AppIcon />MetaTrader 4 at FOREX.com
        </li>
        {TREE.map((n, i) => (
          <li key={n.label} className="flex h-[15px] items-center pl-[7px]">
            <svg viewBox="0 0 14 15" className="h-[15px] w-[14px]" aria-hidden="true">
              <path d={i === TREE.length - 1 ? "M4.500 0v4M9 8.500h5" : "M4.500 0v15M9 8.500h5"} stroke="#999" strokeDasharray="1 1" />
              <rect x="1" y="5" width="7" height="7" rx="1" fill="#f6f6f6" stroke="#999" />
              <path d="M2.500 8.500h4M4.500 6.500v4" stroke="#2f55a0" />
            </svg>
            <span className="mr-1">{n.icon}</span>
            {n.label}
          </li>
        ))}
      </ul>
      <nav className="ml-[2px] flex h-[19px] items-start border-t border-black text-[9px]">
        <button type="button" className="-mt-px ml-[2px] h-[15px] border-r-2 border-b border-l border-black bg-white px-[7px] text-black">Common</button>
        <button type="button" className="h-[15px] px-[7px] text-[#777]">Favorites</button>
        <span className="mt-[3px] h-[10px] w-px bg-[#777]" />
      </nav>
    </aside>
  );
}

function OrderTable() {
  return (
    <table className="h-[203px] w-full table-fixed border-collapse text-right text-[9px] leading-[14px]">
      <colgroup>
        {COLUMNS.map((c, i) => (
          <col key={i} style={{ width: `${(c.w / TOTAL_W) * 100}%` }} />
        ))}
      </colgroup>
      <thead>
        <tr className="h-5 bg-linear-to-b from-white from-50% to-[#f0f1f4]">
          {COLUMNS.map((c, i) => (
            <th
              key={i}
              scope="col"
              className={clsx("border-r border-b border-[#dcdfe4] p-0 font-normal", i === 0 ? "pl-[6px] text-left" : "pr-1")}
            >
              {c.label}
              {i === 0 && <span className="pl-[10px] text-[#888]">/</span>}
            </th>
          ))}
        </tr>
      </thead>
      <tbody>
        {ORDERS.map(([id, time, price, sl, tp, profit]) => (
          <tr key={id} className="odd:bg-white even:bg-[#eaeaea]">
            <td className="border-r border-b border-[#c8c8c8] p-0 pl-[2px]">
              <span className="flex items-center gap-[6px]"><DocIcon />{id}</span>
            </td>
            {[`2010.10.29 ${time}`, "buy", "1.00", "eurusd", price, sl, tp, "2010.11.01 03:03", "1.39753", "1.00", profit].map((v, i) => (
              <td
                key={i}
                className={clsx(
                  "border-b p-0",
                  i < 10 ? "border-r pr-[2px]" : "pr-1",
                  i === 5 ? "border-[#e4d0d0] bg-[#ff9f9f]" : "border-[#c8c8c8]",
                )}
              >
                {v}
              </td>
            ))}
          </tr>
        ))}
      </tbody>
      <tfoot>
        <tr className="h-[17px] bg-[#c6c6c6] font-bold">
          <td colSpan={11} className="p-0 pl-[6px] text-left">
            <span className="flex items-center gap-[9px]">
              <span className="size-[6px] rounded-full border border-[#888] bg-[#ddd]" />
              <span className="whitespace-pre">Profit/Loss: 12 694.00  Credit: 0.00  Deposit: 10 000.00  Withdrawal: 0.00</span>
            </span>
          </td>
          <td className="p-0 pr-1">22 694.00</td>
        </tr>
      </tfoot>
    </table>
  );
}

function ScrollBar() {
  return (
    <div className="flex w-[15px] shrink-0 flex-col items-center justify-between bg-[#f1f1f1] py-[5px]">
      <button type="button" aria-label="Scroll up">
        <svg viewBox="0 0 6 4" className="h-1 w-[6px]" aria-hidden="true"><path d="M0 4h6L3 0z" fill="#333" /></svg>
      </button>
      <div className="flex flex-col items-center gap-[6px]">
        <div className="flex h-10 w-[13px] flex-col items-center justify-center gap-px rounded-sm border border-[#999] bg-linear-to-r from-[#f6f6f6] to-[#d6d6d8]">
          <span className="h-px w-[6px] bg-[#666]" />
          <span className="h-px w-[6px] bg-[#666]" />
          <span className="h-px w-[6px] bg-[#666]" />
        </div>
        <button type="button" aria-label="Scroll down">
          <svg viewBox="0 0 6 4" className="h-1 w-[6px]" aria-hidden="true"><path d="M0 0h6L3 4z" fill="#333" /></svg>
        </button>
      </div>
    </div>
  );
}

function Terminal() {
  const [tab, setTab] = useState("Account History");
  return (
    <section className="flex h-[237px] shrink-0 border-t border-b border-[#a0a0a0] bg-[#f0f0f0] pt-[2px]">
      <div className="flex w-3 shrink-0 flex-col items-center">
        <button type="button" aria-label="Close terminal" className="flex h-[11px] items-center"><CloseX /></button>
        <div className="flex w-[11px] flex-1 items-center bg-linear-to-b from-[#d8e6f4] to-[#bccbda] text-[10px] leading-[11px] text-[#4c5c6c]">
          <span className="rotate-180 self-end pt-[2px] [writing-mode:vertical-rl]">Terminal</span>
        </div>
      </div>
      <div className="flex min-w-0 flex-1 flex-col pr-[2px]">
        <div className="flex flex-1 border-t border-l border-[#a0a0a0] bg-white">
          <div className="min-w-0 flex-1"><OrderTable /></div>
          <ScrollBar />
        </div>
        <nav className="flex h-5 items-start border-t-2 border-[#333] text-[9px]">
          {TERMINAL_TABS.map((t) => (
            <span key={t} className="flex items-start">
              <button
                type="button"
                onClick={() => setTab(t)}
                className={clsx(
                  "whitespace-nowrap",
                  tab === t
                    ? "-mt-[2px] h-[17px] border-r-2 border-b-2 border-l-2 border-black bg-white px-2 pt-px text-black"
                    : "h-[15px] px-[7px] text-[#777]",
                  t === "Trade" && "pl-[9px]",
                )}
              >
                {t}
              </button>
              {tab !== t && t !== "Trade" && <span className="mt-[3px] h-[10px] w-px bg-[#777]" />}
            </span>
          ))}
        </nav>
      </div>
    </section>
  );
}

const STATUS = [
  { text: "Default", cls: "w-[96px]" },
  { text: "2010.10.29 17:41", cls: "w-[85px]" },
  { text: "O: 1.39081", cls: "w-[59px]" },
  { text: "H: 1.39093", cls: "w-[59px]" },
  { text: "L: 1.39071", cls: "w-[57px]" },
  { text: "C: 1.39071", cls: "w-[58px]" },
  { text: "V: 12", cls: "w-[55px]" },
];

function StatusBar() {
  return (
    <footer className="flex h-[18px] shrink-0 items-center bg-[#f0f0f0] pt-px text-[9px]">
      <span className="flex-1 pl-px text-[10px]">For Help, press F1</span>
      {STATUS.map((s) => (
        <span key={s.text} className={clsx("shrink-0 border-l border-[#a0a0a0] pl-1 leading-[14px] whitespace-nowrap", s.cls)}>
          {s.text}
        </span>
      ))}
      <span className="flex w-[134px] shrink-0 items-center border-l border-[#a0a0a0] pl-1 leading-[14px]">
        <svg viewBox="0 0 20 11" className="h-[11px] w-5" aria-hidden="true">
          {Array.from({ length: 10 }, (_, i) => (
            <g key={i}>
              <path d={`M${i * 2 + 0.5} 0v${8 - i * 0.6}`} stroke="#5a8a1a" strokeWidth="1.5" />
              <path d={`M${i * 2 + 0.5} ${9 - i * 0.7}V11`} stroke="#b01818" strokeWidth="1.5" />
            </g>
          ))}
        </svg>
        <span className="flex-1 text-center">483/2 kb</span>
        <svg viewBox="0 0 12 12" className="size-3 self-end" aria-hidden="true">
          <path d="M1 12L12 1M4.500 12L12 4.500M8 12l4-4" stroke="#888" />
        </svg>
      </span>
    </footer>
  );
}

/* ---------- window ---------- */

function TitleBar() {
  return (
    <div className="flex h-[21px] shrink-0 items-start justify-between bg-[#b8dbff] pr-[3px] pl-[7px]">
      <div className="flex h-[19px] items-center gap-1 bg-linear-to-r from-[#d6eaff] to-transparent pr-8">
        <svg viewBox="0 0 13 13" className="size-[13px]" aria-hidden="true">
          <rect x="0.500" y="0.500" width="12" height="12" fill="#fdf6e6" stroke="#f0a030" />
          <path d="M4 3h7l-1 2H6.500L6 6.500h3.500L9 8H6l-.5 3.500H3z" fill="#10284a" />
          <path d="M2 4c-1 2-.5 5 1 6" stroke="#10284a" fill="none" />
        </svg>
        <h1 className="text-[11px] whitespace-nowrap">90628266: MetaTrader 4 at FOREX.com - Demo Account - [EURUSD,M1]</h1>
      </div>
      <div className="flex h-[13px] overflow-hidden rounded-b-sm border border-t-0 border-[#4c6277]">
        <button type="button" aria-label="Minimize" className="flex w-[23px] items-center justify-center border-r border-[#4c6277] bg-linear-to-b from-[#cfe0f1] from-40% to-[#9db6cf]">
          <span className="mt-1 h-1 w-[9px] rounded-[1px] border border-[#555] bg-white" />
        </button>
        <button type="button" aria-label="Restore" className="flex w-[22px] items-center justify-center border-r border-[#4c6277] bg-linear-to-b from-[#cfe0f1] from-40% to-[#9db6cf]">
          <span className="flex size-[9px] items-center justify-center border border-[#555] bg-white">
            <span className="size-[5px] border border-[#555]" />
          </span>
        </button>
        <button type="button" aria-label="Close" className="flex w-[38px] items-center justify-center bg-linear-to-b from-[#e4a08f] from-30% to-[#c23a20] to-50%">
          <svg viewBox="0 0 10 9" className="h-[9px] w-[10px]" aria-hidden="true">
            <path d="M1.500 1l7 7M8.500 1l-7 7" stroke="#444" strokeWidth="3.500" />
            <path d="M1.500 1l7 7M8.500 1l-7 7" stroke="#fff" strokeWidth="2" />
          </svg>
        </button>
      </div>
    </div>
  );
}

const MDI_BUTTONS = [
  { label: "Minimize chart", d: "M3 9h4" },
  { label: "Restore chart", d: "M4.500 3.500V2h4v4H7M2.500 4.500h4v4h-4z" },
  { label: "Close chart", d: "M3 3l4.500 5M7.500 3L3 8" },
];

function MenuBar() {
  return (
    <div className="flex h-4 shrink-0 items-start justify-between border-b border-[#b4b4b4] bg-[#f0f0f0] pl-1">
      <nav className="flex items-center text-[9px]">
        <AppIcon />
        {MENU.map((m) => (
          <button key={m} type="button" className="pr-2 pl-[6px] leading-[14px]">{m}</button>
        ))}
      </nav>
      <div className="flex gap-px">
        {MDI_BUTTONS.map((b) => (
          <button key={b.label} type="button" aria-label={b.label} className="flex h-[14px] w-[15px] items-center justify-center border border-[#bccbdc] bg-[#dfeaf6]">
            <svg viewBox="0 0 11 11" className="size-[11px]" aria-hidden="true">
              <path d={b.d} stroke="#4c6077" strokeWidth="1.3" fill="none" />
            </svg>
          </button>
        ))}
      </div>
    </div>
  );
}

// widths of the visible task buttons
const TASKS = [191, 95, 96, 96, 95, 190, 95, 95, 94, 95, 190];

function Taskbar() {
  return (
    <div className="relative flex h-1 shrink-0 gap-[2px] bg-[#33455c] pl-[88px]">
      <span className="absolute -top-[3px] left-3 h-[7px] w-6 overflow-hidden rounded-t-full border border-b-0 border-[#4a7a9a] bg-[#a9c4d6]">
        <span className="mx-auto mt-[3px] block h-1 w-3 rounded-t-full bg-[#d8562a]" />
      </span>
      {TASKS.map((w, i) => (
        <span key={i} className="mt-px bg-linear-to-r from-[#cdd8e4] to-[#71859c]" style={{ width: `${(w / 1512) * 100}%` }} />
      ))}
    </div>
  );
}

export default function App() {
  return (
    <div className="relative flex h-screen flex-col overflow-hidden bg-[#b8dbff] font-['Roboto','Liberation_Sans',sans-serif] text-[9px] text-black">
      <span className="absolute top-0 left-0 h-7/8 w-px bg-[#5a6470]" />
      <span className="absolute bottom-1 left-0 h-1/8 w-[3px] bg-white" />
      <TitleBar />
      <main className="mr-1 ml-[6px] flex min-h-0 flex-1 flex-col border-t border-l border-[#6f8296] bg-[#f0f0f0] pt-px">
        <MenuBar />
        <Toolbar />
        <div className="flex min-h-0 flex-1">
          <Navigator />
          <div className="flex min-w-0 flex-1 flex-col">
            <div className="min-h-0 flex-1 border-t border-r border-l-3 border-t-[#555] border-r-[#e8e8e8] border-l-[#808080] bg-black">
              <PriceChart />
            </div>
            <div className="flex h-[17px] shrink-0 items-center justify-between border-t border-[#333]">
              <nav className="ml-[3px] flex items-start self-start text-[9px]">
                <button type="button" className="-mt-px h-[17px] border-r-2 border-b-2 border-l border-black bg-white px-2 pt-px text-black">EURUSD,M1</button>
                <button type="button" className="h-[15px] px-2 text-[#777]">EURUSD,M10 (offline)</button>
                <span className="mt-[3px] h-[10px] w-px bg-[#777]" />
              </nav>
              <div className="flex gap-[10px] pr-[6px]">
                <button type="button" aria-label="Previous chart">
                  <svg viewBox="0 0 4 6" className="h-[6px] w-1" aria-hidden="true"><path d="M4 0v6L0 3z" fill="#777" /></svg>
                </button>
                <button type="button" aria-label="Next chart">
                  <svg viewBox="0 0 4 6" className="h-[6px] w-1" aria-hidden="true"><path d="M0 0v6l4-3z" fill="#777" /></svg>
                </button>
              </div>
            </div>
          </div>
        </div>
        <Terminal />
        <StatusBar />
      </main>
      <div className="h-[2px] shrink-0 border-b border-[#3f6f90] bg-[#a4cdea]" />
      <Taskbar />
    </div>
  );
}
